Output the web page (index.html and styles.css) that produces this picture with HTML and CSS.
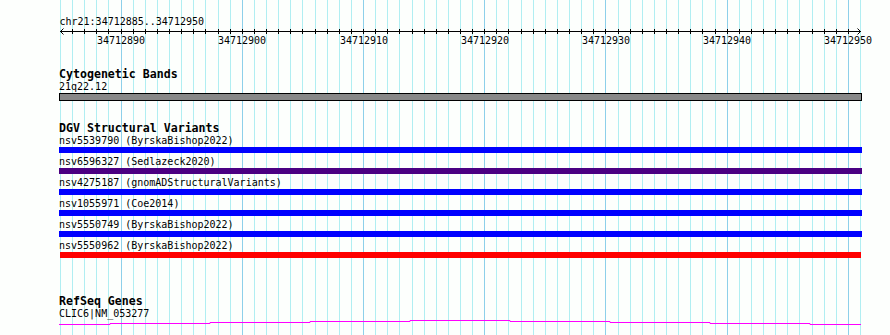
FILE: index.html
```html
<!DOCTYPE html>
<html lang="en">
<head>
    <meta charset="UTF-8">
    <link rel="stylesheet" href="styles.css">
</head>
<body>
    <div class="view">
        <svg class="grid" id="grid" width="890" height="335"></svg>

        <svg class="ruler" id="ruler" width="890" height="67">
            <text class="ruler-loc" x="59.5" y="25">chr21:34712885..34712950</text>
            <line x1="60" y1="31.5" x2="861" y2="31.5" stroke="#000"/>
            <polyline points="63.5,28.5 60.5,31.5 63.5,34.5" fill="none" stroke="#000"/>
            <polyline points="857.5,28.5 860.5,31.5 857.5,34.5" fill="none" stroke="#000"/>
            <g id="ticks"></g>
            <g class="ruler-labels" text-anchor="middle">
                <text x="121" y="44">34712890</text>
                <text x="242" y="44">34712900</text>
                <text x="364" y="44">34712910</text>
                <text x="485" y="44">34712920</text>
                <text x="606" y="44">34712930</text>
                <text x="727" y="44">34712940</text>
                <text x="848" y="44">34712950</text>
            </g>
        </svg>

        <section class="track cyto">
            <h3 class="track-title">Cytogenetic Bands</h3>
            <div class="feature-label">21q22.12</div>
            <div class="band"></div>
        </section>

        <section class="track dgv">
            <h3 class="track-title">DGV Structural Variants</h3>
            <div class="feature-label">nsv5539790 (ByrskaBishop2022)</div>
            <div class="bar blue"></div>
            <div class="feature-label">nsv6596327 (Sedlazeck2020)</div>
            <div class="bar purple"></div>
            <div class="feature-label">nsv4275187 (gnomADStructuralVariants)</div>
            <div class="bar blue"></div>
            <div class="feature-label">nsv1055971 (Coe2014)</div>
            <div class="bar blue"></div>
            <div class="feature-label">nsv5550749 (ByrskaBishop2022)</div>
            <div class="bar blue"></div>
            <div class="feature-label">nsv5550962 (ByrskaBishop2022)</div>
            <div class="bar red"></div>
        </section>

        <section class="track refseq">
            <h3 class="track-title">RefSeq Genes</h3>
            <div class="feature-label">CLIC6|NM_053277</div>
            <svg class="gene" width="890" height="15">
                <polyline fill="none" stroke="#ff00ff" stroke-width="1"
                    points="59,4.5 110,4.5 110,3.5 210,3.5 210,2.5 310,2.5 310,1.5 410,1.5 410,0.5 510,0.5 510,1.5 610,1.5 610,2.5 710,2.5 710,3.5 810,3.5 810,4.5 861,4.5"/>
            </svg>
        </section>
    </div>

    <script>
        const NS = 'http://www.w3.org/2000/svg';
        const grid = document.getElementById('grid');
        const ticks = document.getElementById('ticks');

        // one line per base, darker every 10 bp
        for (let i = 0; i <= 66; i++) {
            const x = Math.round(60 + i * 800 / 66) + 0.5;
            const line = document.createElementNS(NS, 'line');
            line.setAttribute('x1', x);
            line.setAttribute('x2', x);
            line.setAttribute('y1', 0);
            line.setAttribute('y2', 335);
            line.setAttribute('class', i % 10 === 5 ? 'major' : 'minor');
            grid.appendChild(line);

            if (i > 0 && i < 66) {
                const tick = document.createElementNS(NS, 'line');
                tick.setAttribute('x1', x);
                tick.setAttribute('x2', x);
                tick.setAttribute('y1', 29);
                tick.setAttribute('y2', 34);
                tick.setAttribute('stroke', '#000');
                ticks.appendChild(tick);
            }
        }
    </script>
</body>
</html>
```

FILE: styles.css
```css
body {
    margin: 0;
    background-color: #fdfffd;
    font-family: "DejaVu Sans Mono", monospace;
    font-size: 10px;
    color: #000;
}
.view {
    position: relative;
    z-index: 0;
    width: 890px;
    height: 335px;
    overflow: hidden;
}
.grid {
    position: absolute;
    top: 0;
    left: 0;
    z-index: -1;
}
.grid .minor {
    stroke: #b0eef2;
}
.grid .major {
    stroke: #8dd0ea;
}
.ruler {
    display: block;
}
.ruler text {
    font-family: "DejaVu Sans Mono", monospace;
    font-size: 10px;
    fill: #000;
}
.track-title {
    margin: 0;
    padding: 1px 0 0 59px;
    font-size: 11.6px;
    font-weight: bold;
    line-height: 12px;
}
.feature-label {
    padding-left: 59px;
    line-height: 13px;
    white-space: nowrap;
}
.band {
    margin-left: 59px;
    width: 801px;
    height: 6px;
    border: 1px solid #000;
    background-color: #888;
}
.dgv {
    margin-top: 20px;
}
.bar {
    margin-left: 59px;
    width: 803px;
    height: 6px;
    margin-bottom: 2px;
}
.bar.blue {
    background-color: #0000ff;
}
.bar.purple {
    background-color: #4b0082;
}
.bar.red {
    margin-left: 60px;
    width: 801px;
    background-color: #ff0000;
}
.refseq {
    margin-top: 36px;
}
.gene {
    display: block;
}
```
